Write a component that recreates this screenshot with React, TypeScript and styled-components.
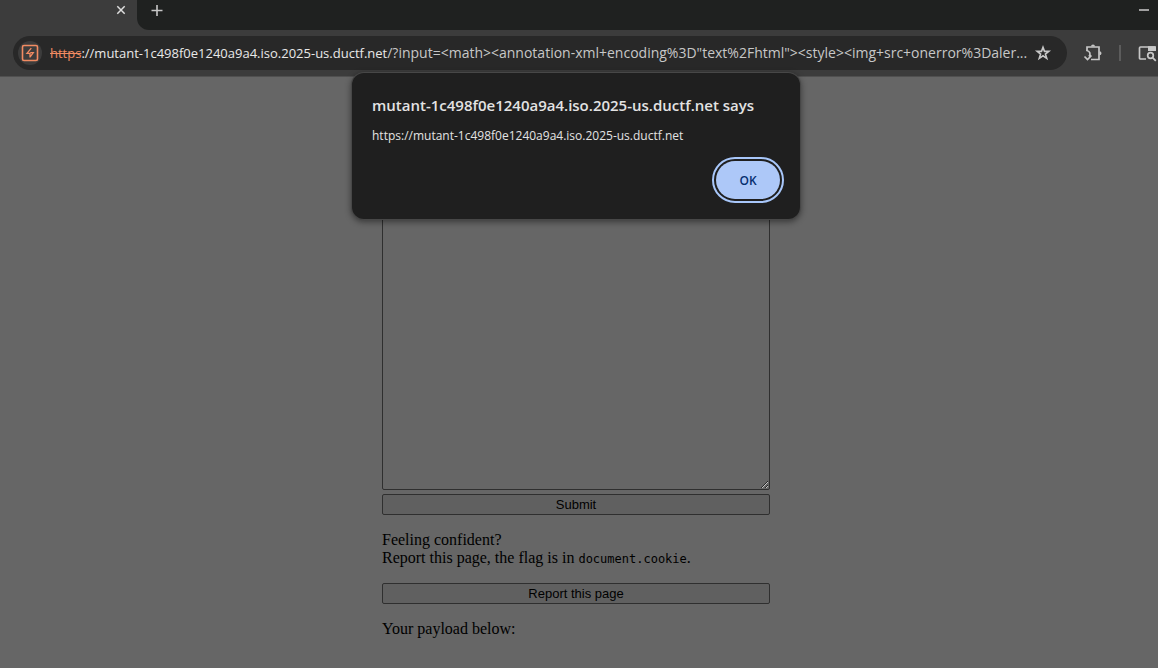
import React from "react";
import styled, { createGlobalStyle } from "styled-components";

const UI_FONT = '"Open Sans", "Noto Sans", sans-serif';

const GlobalStyle = createGlobalStyle`
  html, body, #root { height: 100%; }
  body { margin: 0; background: #666666; }
  * { box-sizing: border-box; }
`;

const Browser = styled.div`
  display: flex;
  flex-direction: column;
  min-height: 100%;
  min-width: 0;
  overflow: hidden;
`;

const TabStrip = styled.header`
  display: flex;
  align-items: stretch;
  height: 30px;
  background: #1f2120;
`;

const Tab = styled.div`
  display: flex;
  align-items: flex-start;
  justify-content: flex-end;
  width: 137px;
  padding: 2px 8px 0 0;
  background: #3c3c3c;
`;

const TabCurve = styled.div`
  width: 12px;
  background: #3c3c3c;

  &::after {
    content: "";
    display: block;
    height: 100%;
    background: #1f2120;
    border-bottom-left-radius: 12px;
  }
`;

const IconButton = styled.button<{ $size?: number; $color?: string }>`
  display: flex;
  flex: none;
  align-items: center;
  justify-content: center;
  width: ${(p) => p.$size ?? 20}px;
  height: ${(p) => p.$size ?? 20}px;
  padding: 0;
  border: 0;
  border-radius: 50%;
  background: transparent;
  color: ${(p) => p.$color ?? "#c7c7c7"};
`;

const TabActions = styled.div`
  display: flex;
  flex: 1;
  justify-content: space-between;
  padding: 0 4px 0 0;
`;

const Toolbar = styled.div`
  display: flex;
  align-items: center;
  height: 47px;
  padding: 0 1px 0 13px;
  background: #3c3c3c;
  border-bottom: 1px solid #505050;
`;

const AddressBar = styled.div`
  display: flex;
  flex: 1;
  align-items: center;
  min-width: 0;
  height: 34px;
  padding: 0 12px 0 5px;
  border-radius: 17px;
  background: #282828;
`;

const SiteButton = styled(IconButton)`
  background: #3c3c3c;
`;

const Url = styled.div`
  flex: 1;
  min-width: 0;
  margin: 0 4px 0 8px;
  overflow: hidden;
  white-space: nowrap;
  color: #c7c7c7;
  font: 14px/20px ${UI_FONT};
`;

const Origin = styled.span`
  color: #e8e8e8;
  font-size: 13px;
`;

const Scheme = styled.span`
  color: #f28b62;
  text-decoration: line-through;
`;

const ToolbarActions = styled.div`
  display: flex;
  flex: none;
  align-items: center;
  gap: 16px;
  padding-left: 16px;
`;

const Divider = styled.div`
  width: 2px;
  height: 16px;
  background: #5c5c5c;
`;

const Viewport = styled.div`
  position: relative;
  flex: 1;
  margin-right: 6px;
`;

const Page = styled.main`
  width: 388px;
  max-width: 100%;
  margin: 0 auto;
  padding: 73px 0 16px;
  color: #000;
  font: 16px/18px "Liberation Serif", serif;
`;

const Form = styled.form`
  display: flex;
  flex-direction: column;
  gap: 4px;
`;

const Payload = styled.textarea`
  display: block;
  width: 100%;
  height: 340px;
  border: 1px solid #2f2f2f;
  border-radius: 2px;
  background: #666666;
  resize: vertical;
`;

const PageButton = styled.button`
  display: block;
  width: 100%;
  height: 21px;
  padding: 0;
  border: 1px solid #2f2f2f;
  border-radius: 2px;
  background: #606060;
  color: #000;
  font: 13px/18px "Liberation Sans", sans-serif;
`;

const Paragraph = styled.p`
  margin: 16px 0;
`;

const Code = styled.code`
  font: 12px/16px "DejaVu Sans Mono", monospace;
`;

const Dialog = styled.div`
  position: absolute;
  top: -4px;
  left: calc(50% - 224px);
  width: 448px;
  height: 146px;
  padding: 21px 20px 20px;
  border-radius: 12px;
  background: #1f1f1f;
  box-shadow: 0 0 0 1px #474747, 0 2px 6px 1px rgba(0, 0, 0, 0.45);
  color: #e3e3e3;
  font-family: ${UI_FONT};
`;

const DialogTitle = styled.h1`
  margin: 0;
  font-size: 15px;
  font-weight: 600;
  line-height: 22px;
  white-space: nowrap;
`;

const DialogMessage = styled.p`
  margin: 10px 0 15px;
  font-size: 12px;
  line-height: 20px;
  white-space: nowrap;
`;

const OkButton = styled.button`
  display: block;
  width: 64px;
  height: 38px;
  margin-left: auto;
  padding: 2px 0 0;
  border: 0;
  border-radius: 19px;
  outline: 2px solid #a8c7fa;
  outline-offset: 2px;
  background: #adc8f8;
  color: #062e6f;
  font: 600 12px/20px ${UI_FONT};
`;

export default function App() {
  return (
    <>
      <GlobalStyle />
      <Browser>
        <TabStrip>
          <Tab>
            <IconButton $size={16} $color="#dedede" aria-label="Close tab">
              <svg width="16" height="16" viewBox="0 0 16 16" fill="none" stroke="currentColor" strokeWidth="1.5">
                <path d="M4.3 4.3l7.4 7.4M11.7 4.3l-7.4 7.4" />
              </svg>
            </IconButton>
          </Tab>
          <TabCurve />
          <TabActions>
            <IconButton $size={16} aria-label="New tab">
              <svg width="16" height="16" viewBox="0 0 16 16" fill="none" stroke="currentColor" strokeWidth="1.6">
                <path d="M8 5v11M2.500 10.500h11" />
              </svg>
            </IconButton>
            <IconButton $size={20} $color="#a0a0a0" aria-label="Minimize">
              <svg width="20" height="20" viewBox="0 0 20 20">
                <path d="M5 9h10v2H5z" fill="currentColor" />
              </svg>
            </IconButton>
          </TabActions>
        </TabStrip>

        <Toolbar>
          <AddressBar>
            <SiteButton $size={24} $color="#f28b62" aria-label="View site information">
              <svg width="18" height="18" viewBox="0 0 18 18" fill="none" stroke="currentColor" strokeWidth="1.6">
                <rect x="1.500" y="1.500" width="15" height="15" rx="1.500" />
                <path d="M10.300 4.200L6 9.300h3v4.200M9.300 8.600h3L9 13.200" strokeWidth="1.3" />
              </svg>
            </SiteButton>
            <Url role="textbox" aria-label="Address and search bar" tabIndex={0}>
              <Origin>
                <Scheme>https</Scheme>
                ://mutant-1c498f0e1240a9a4.iso.2025-us.ductf.net
              </Origin>
              {'/?input=<math><annotation-xml+encoding%3D"text%2Fhtml"><style><img+src+onerror%3Daler...'}
            </Url>
            <IconButton $size={24} aria-label="Bookmark this tab">
              <svg width="18" height="18" viewBox="0 0 18 18" fill="none" stroke="currentColor" strokeWidth="1.6">
                <path d="M9 3.400l1.500 4h4.300l-3.400 2.700 1.300 4.200L9 11.800l-3.700 2.500 1.300-4.200L3.200 7.400h4.300z" />
              </svg>
            </IconButton>
          </AddressBar>
          <ToolbarActions>
            <IconButton $size={20} aria-label="Extensions">
              <svg width="20" height="20" viewBox="0 0 20 20" fill="none" stroke="currentColor" strokeWidth="1.7">
                <path d="M4 8V4h12v12.500H8" />
                <path d="M3.500 7.500c3.500.5 4.500 3.500 2.500 6M1.500 13.500l3 3 4-4" />
                <path d="M8 3.500a2 2 0 0 1 4 0zM16.500 8.200a2 2 0 0 1 0 4z" fill="currentColor" stroke="none" />
              </svg>
            </IconButton>
            <Divider />
            <IconButton $size={20} aria-label="Search side panel">
              <svg width="20" height="20" viewBox="0 0 20 20" fill="none" stroke="currentColor" strokeWidth="1.7">
                <path d="M9 16H3.500a1 1 0 0 1-1-1V5a1 1 0 0 1 1-1H18" />
                <path d="M11 3.200h8V8h-8z" fill="currentColor" stroke="none" />
                <circle cx="13.500" cy="12.500" r="2.800" />
                <path d="M15.600 14.600l3.200 3.200" />
              </svg>
            </IconButton>
          </ToolbarActions>
        </Toolbar>

        <Viewport>
          <Page>
            <Form onSubmit={(e) => e.preventDefault()}>
              <Payload aria-label="Payload" />
              <PageButton type="submit">Submit</PageButton>
            </Form>
            <Paragraph>
              Feeling confident?
              <br />
              Report this page, the flag is in <Code>document.cookie</Code>.
            </Paragraph>
            <PageButton type="button">Report this page</PageButton>
            <Paragraph>Your payload below:</Paragraph>
          </Page>
          <Dialog role="alertdialog" aria-labelledby="dialog-title" aria-describedby="dialog-message">
            <DialogTitle id="dialog-title">mutant-1c498f0e1240a9a4.iso.2025-us.ductf.net says</DialogTitle>
            <DialogMessage id="dialog-message">https://mutant-1c498f0e1240a9a4.iso.2025-us.ductf.net</DialogMessage>
            <OkButton type="button">OK</OkButton>
          </Dialog>
        </Viewport>
      </Browser>
    </>
  );
}
